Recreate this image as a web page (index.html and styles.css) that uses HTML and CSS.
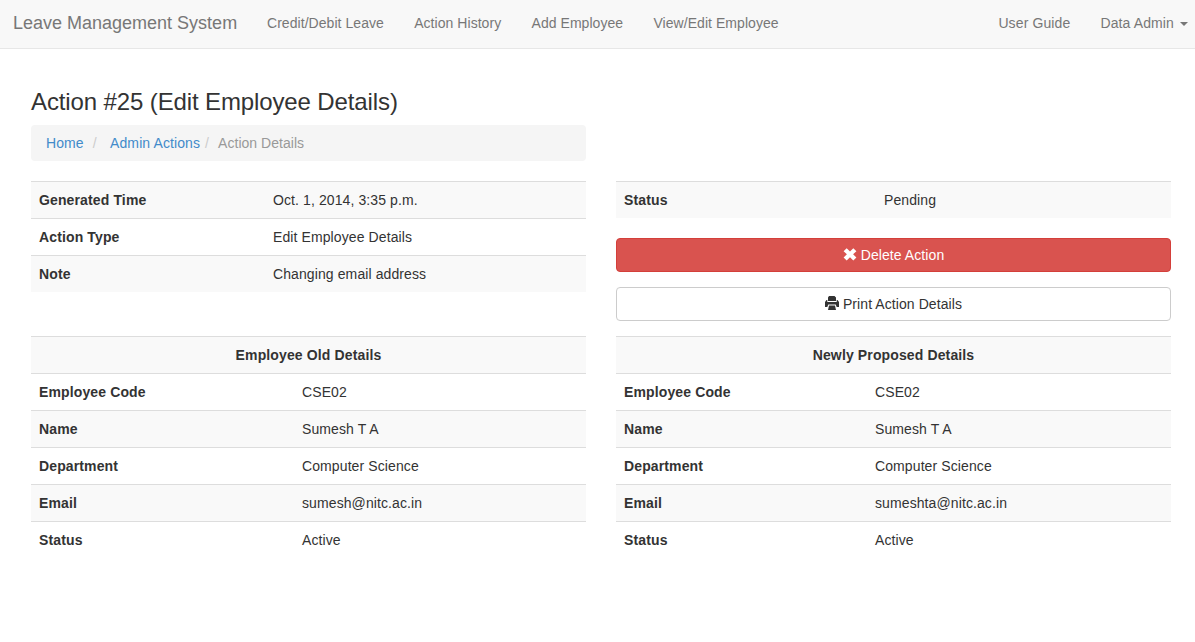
FILE: index.html
```html
<!DOCTYPE html>
<html lang="en">
<head>
<meta charset="utf-8">
<title>Leave Management System</title>
<link rel="stylesheet" href="styles.css">
</head>
<body>
<nav class="navbar">
  <a class="brand">Leave Management System</a>
  <ul class="nav nav-left">
    <li>Credit/Debit Leave</li>
    <li>Action History</li>
    <li>Add Employee</li>
    <li>View/Edit Employee</li>
  </ul>
  <ul class="nav nav-right">
    <li>User Guide</li>
    <li>Data Admin <span class="caret"></span></li>
  </ul>
</nav>
<main class="container">
  <h3>Action #25 (Edit Employee Details)</h3>
  <div class="row">
    <ol class="breadcrumb">
      <li><a>Home</a></li>
      <li class="sep">/</li>
      <li><a>Admin Actions</a></li>
      <li class="sep last">/</li>
      <li class="current">Action Details</li>
    </ol>
  </div>
  <div class="row summary">
    <table class="table info">
      <tr><th>Generated Time</th><td>Oct. 1, 2014, 3:35 p.m.</td></tr>
      <tr><th>Action Type</th><td>Edit Employee Details</td></tr>
      <tr><th>Note</th><td>Changing email address</td></tr>
    </table>
    <div class="actions">
      <table class="table state">
        <tr><th>Status</th><td>Pending</td></tr>
      </table>
      <button class="btn danger"><svg class="icon" viewBox="0 0 14 14"><path d="M3.700 .3 7 3.500 10.300 .3 13.400 3.300 10.100 6.300 13.400 9.400 10.300 12.400 7 9.200 3.700 12.400 .6 9.400 3.900 6.300 .6 3.300z"/></svg><span>Delete Action</span></button>
      <button class="btn plain"><svg class="icon print" viewBox="0 0 14 14"><path d="M4 0h5.500L11 1.500V5H3V1.500zM1.500 4H2.300V6h9.400V4h.8L14 6v5h-2.300l-1-2.500H3.300l-1 2.500H0V6zM4 9.500h6l1 4.500H3z"/></svg><span>Print Action Details</span></button>
    </div>
  </div>
  <div class="row">
    <table class="table old">
      <tr><th class="center" colspan="2">Employee Old Details</th></tr>
      <tr><th>Employee Code</th><td>CSE02</td></tr>
      <tr><th>Name</th><td>Sumesh T A</td></tr>
      <tr><th>Department</th><td>Computer Science</td></tr>
      <tr><th>Email</th><td>sumesh@nitc.ac.in</td></tr>
      <tr><th>Status</th><td>Active</td></tr>
    </table>
    <table class="table new">
      <tr><th class="center" colspan="2">Newly Proposed Details</th></tr>
      <tr><th>Employee Code</th><td>CSE02</td></tr>
      <tr><th>Name</th><td>Sumesh T A</td></tr>
      <tr><th>Department</th><td>Computer Science</td></tr>
      <tr><th>Email</th><td>sumeshta@nitc.ac.in</td></tr>
      <tr><th>Status</th><td>Active</td></tr>
    </table>
  </div>
</main>
</body>
</html>
```
FILE: styles.css
```css
* { box-sizing: border-box; }
body { margin: 0; font: 14px/20px "Liberation Sans", Arial, sans-serif; letter-spacing: .1px; color: #333; background: #fff; }
.navbar { display: flex; height: 49px; padding: 13px 7px 0 13px; background: #f8f8f8; border-bottom: 1px solid #e7e7e7; color: #777; white-space: nowrap; }
.brand { font-size: 18px; width: 254px; flex: none; letter-spacing: 0; }
.nav { display: flex; gap: 30px; margin: 0; padding: 0; list-style: none; }
.nav-left { gap: 30.300px; letter-spacing: .05px; }
.nav-right { margin-left: auto; letter-spacing: .12px; }
.caret { display: inline-block; margin-left: 2px; vertical-align: middle; border-top: 4px solid #777; border-left: 4px solid transparent; border-right: 4px solid transparent; }
.container { padding: 40px 24px 0 31px; }
h3 { margin: 0 0 10px; font-size: 24px; line-height: 26px; font-weight: 500; letter-spacing: -.12px; }
.row { display: grid; grid-template-columns: 555px 555px; column-gap: 30px; align-items: start; }
.breadcrumb { display: flex; height: 36px; margin: 0 0 20px; padding: 8px 15px; background: #f5f5f5; border-radius: 4px; list-style: none; }
.breadcrumb a { color: #428bca; }
.sep { color: #ccc; padding: 0 13.300px 0 9px; }
.sep.last { padding: 0 9px 0 5px; }
.current { color: #999; letter-spacing: .03px; }
.summary { height: 155px; }
.table { width: 555px; table-layout: fixed; border-collapse: separate; border-spacing: 0; }
.table th, .table td { height: 37px; padding: 8px; text-align: left; border-top: 1px solid #ddd; }
.table th { letter-spacing: .13px; }
.table tr:nth-child(odd) { background: #f9f9f9; }
.table .center { text-align: center; }
.info th { width: 234px; }
.state th { width: 260px; }
.old, .new { table-layout: auto; }
.old td { width: 292px; }
.new td { width: 304px; }
.actions { display: flex; flex-direction: column; }
.btn { display: flex; align-items: center; justify-content: center; gap: 4px; height: 34px; margin: 0; padding: 0; border: 1px solid #ccc; border-radius: 4px; font: inherit; letter-spacing: .08px; color: #333; background: #fff; }
.danger { margin: 20px 0 15px; color: #fff; background: #d9534f; border-color: #d43f3a; }
.icon { width: 14px; height: 14px; fill: currentColor; }
.print { margin-bottom: 2px; }
```
